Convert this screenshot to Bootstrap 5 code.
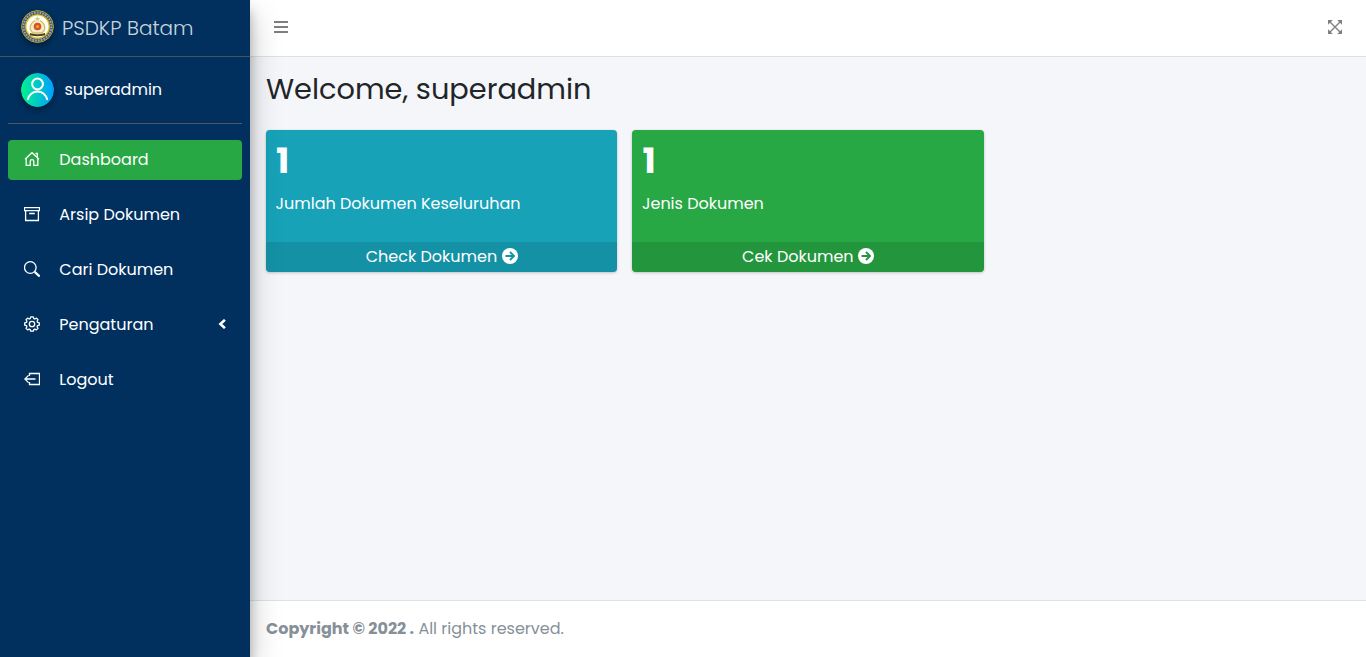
<!DOCTYPE html>
<html lang="id">
<head>
<meta charset="utf-8">
<meta name="viewport" content="width=device-width, initial-scale=1">
<title>PSDKP Batam</title>
<link href="https://cdn.jsdelivr.net/npm/bootstrap@5.3.0/dist/css/bootstrap.min.css" rel="stylesheet">
<style>
body{font-family:Poppins,Inter,sans-serif;font-size:16px;line-height:1.5;color:#212529;background:#f4f6f9;overflow:hidden}
a{text-decoration:none;color:inherit}
svg{display:block;flex:none}
.side{width:250px;background:#01305f;color:#fff;box-shadow:0 14px 28px rgba(0,0,0,.25),0 10px 10px rgba(0,0,0,.22);z-index:2}
.brand{height:57px;border-bottom:1px solid #4b545c;padding-left:21px;font-size:20px;font-weight:300;color:rgba(255,255,255,.8)}
.seal{margin:-3px 8px 0 0}
.round-pic{border-radius:50%;box-shadow:0 3px 6px rgba(0,0,0,.16),0 3px 6px rgba(0,0,0,.23)}
.user{height:67px;margin:0 8px;padding-left:13px;border-bottom:1px solid #4f5962;gap:10.5px}
.menu{padding:16px 8px;gap:15px}
.menu a{height:40px;padding:0 16px;border-radius:4px}
.menu a.current{background:#28a745}
.menu svg{margin-bottom:2px}
.menu svg.ic{margin-right:19.3px}
.topbar{height:57px;background:#fff;border-bottom:1px solid #dee2e6;padding:0 24px 2px;color:#7f7f7f}
.welcome{font-size:28.8px;font-weight:400;line-height:34px;margin:15px 0 24px}
.tiles{gap:15px;padding-left:16px}
.tile{width:351.4px;height:142px;border-radius:4px;color:#fff;box-shadow:0 0 1px rgba(0,0,0,.125),0 1px 3px rgba(0,0,0,.2);overflow:hidden}
.tile b{font-size:35.2px;font-weight:700;line-height:42px;padding:10px 10px 0;display:block}
.tile p{margin:10px 9.6px 0}
.tile a{height:30px;background:rgba(0,0,0,.1);gap:4.5px}
.tile svg{margin-bottom:2px}
.t-info{background:#17a2b8}.t-ok{background:#28a745}
.foot{height:57px;background:#fff;border-top:1px solid #dee2e6;padding:0 16px;color:#869099;gap:4.3px}
</style>
</head>
<body>
<div class="d-flex vh-100">
  <aside class="side d-flex flex-column flex-shrink-0 position-relative">
    <a href="#" class="brand d-flex align-items-center">
      <svg class="round-pic seal" width="33" height="33" viewBox="0 0 33 33">
        <circle cx="16.5" cy="16.5" r="16" fill="#55555f" stroke="#b5b02f"/>
        <circle cx="16.5" cy="16.5" r="13.9" fill="none" stroke="#a5a4ac" stroke-width="2" stroke-dasharray="1.600 1.200"/>
        <circle cx="16.5" cy="16.5" r="11.7" fill="#fffef2" stroke="#c9c52d" stroke-width="1.3"/>
        <path d="M16.5 6l1 2 2 .2-1.500 1.300.3 2-1.800-1-1.800 1 .3-2-1.500-1.300 2-.2z" fill="#e0cf80"/>
        <path d="M14 10.500C8 14 8 20 12 23h9c4-3 4-9-2-12.500" fill="#f3ebc9" stroke="#d3bb6c" stroke-width="1.300"/>
        <circle cx="16.500" cy="16.500" r="3.800" fill="#d9531d"/><circle cx="16.500" cy="16.500" r="1.500" fill="#f0a13b"/>
        <path d="M9 23q7.500 2.500 15 0v2.300q-7.500 2-15 0z" fill="#4b4221"/>
      </svg>
      <span>PSDKP Batam</span>
    </a>
    <div class="user d-flex align-items-center">
      <svg class="round-pic" width="33" height="34" viewBox="0 0 33 34">
        <defs><linearGradient id="av"><stop stop-color="#00f38d"/><stop offset="1" stop-color="#009eff"/></linearGradient></defs>
        <ellipse cx="16.500" cy="17" rx="16.500" ry="17" fill="url(#av)"/>
        <g fill="none" stroke="#fff" stroke-width="2" stroke-linecap="round"><circle cx="16.500" cy="11" r="5.400"/><path d="M6.900 26.300a9.800 9.800 0 0 1 19.200 0"/></g>
      </svg>
      <a href="#">superadmin</a>
    </div>
    <nav class="menu d-flex flex-column">
      <a href="#" class="current d-flex align-items-center">
        <svg class="ic" width="16" height="16" viewBox="0 0 16 16" fill="none" stroke="#fff" stroke-width="1.300"><path d="M1 8.200L8 1.700l7 6.500M11.500 2.500h1.800v4M2.200 7.300V14.400h4V10.400a1.800 1.800 0 0 1 3.600 0v4h4V7.300"/></svg>
        <span>Dashboard</span></a>
      <a href="#" class="d-flex align-items-center">
        <svg class="ic" width="16" height="16" viewBox="0 0 16 16" fill="none" stroke="#fff" stroke-width="1.300"><path d="M.5 1.600h15v3H.5zM1.600 4.600v9.900h12.800V4.600M5.200 7.500h5.600"/></svg>
        <span>Arsip Dokumen</span></a>
      <a href="#" class="d-flex align-items-center">
        <svg class="ic" width="16" height="16" viewBox="0 0 16 16" fill="none" stroke="#fff" stroke-width="1.300"><circle cx="6.300" cy="6.500" r="5.800"/><path d="M10.700 10.900l5 4.600" stroke-width="2.200"/></svg>
        <span>Cari Dokumen</span></a>
      <a href="#" class="d-flex align-items-center">
        <svg class="ic" width="16" height="16" viewBox="0 0 16 16" fill="none" stroke="#fff" stroke-width="1.300" stroke-linejoin="round"><circle cx="8" cy="8" r="2.700"/><path d="M6.700.8h2.600l.5 1.800 1 .4 1.700-.9 1.500 1.600-.9 1.600.4 1.100 1.800.4v2.400l-1.800.5-.4 1.100.9 1.600-1.600 1.500-1.600-.8-1 .4-.5 1.700H6.700l-.5-1.700-1-.4-1.600.8L2 12.400l.9-1.600-.4-1.100-1.800-.5V6.800l1.800-.4.4-1.100L2 3.700l1.600-1.600 1.600.9 1-.4z"/></svg>
        <span>Pengaturan</span>
        <svg class="ms-auto" width="8" height="10" viewBox="0 0 8 10" fill="none" stroke="#fff" stroke-width="2.600"><path d="M6.900.9L2.400 5l4.500 4.100"/></svg></a>
      <a href="#" class="d-flex align-items-center">
        <svg class="ic" width="16" height="16" viewBox="0 0 16 16" fill="none" stroke="#fff" stroke-width="1.300"><path d="M5.500 5V2.500h10v11h-10V11M11.500 8H1M4.500 4.400L.9 8l3.600 3.600"/></svg>
        <span>Logout</span></a>
    </nav>
  </aside>
  <div class="flex-grow-1 d-flex flex-column">
    <header class="topbar d-flex align-items-center justify-content-between">
      <svg width="14" height="12" viewBox="0 0 14 12"><path d="M0 0h14v2H0zM0 5h14v2H0zM0 10h14v2H0z" fill="currentColor"/></svg>
      <svg width="14" height="14" viewBox="0 0 14 14" fill="currentColor"><path d="M0 0h4.800L0 4.800zM14 0v4.800L9.200 0zM0 14V9.200L4.800 14zM14 14H9.200L14 9.200z"/><path d="M1.500 1.500l11 11M12.500 1.500l-11 11" stroke="currentColor" stroke-width="1.400"/></svg>
    </header>
    <main class="flex-grow-1">
      <h1 class="welcome px-3">Welcome, superadmin</h1>
      <div class="tiles d-flex">
        <section class="tile t-info d-flex flex-column">
          <b>1</b><p>Jumlah Dokumen Keseluruhan</p>
          <a href="#" class="mt-auto d-flex align-items-center justify-content-center"><span>Check Dokumen</span>
          <svg width="16" height="16" viewBox="0 0 16 16"><circle cx="8" cy="8" r="8" fill="#fff"/><path d="M3.500 8h8M8 4l4 4-4 4" fill="none" stroke="#1592a6" stroke-width="1.900"/></svg></a>
        </section>
        <section class="tile t-ok d-flex flex-column">
          <b>1</b><p>Jenis Dokumen</p>
          <a href="#" class="mt-auto d-flex align-items-center justify-content-center"><span>Cek Dokumen</span>
          <svg width="16" height="16" viewBox="0 0 16 16"><circle cx="8" cy="8" r="8" fill="#fff"/><path d="M3.500 8h8M8 4l4 4-4 4" fill="none" stroke="#24963e" stroke-width="1.900"/></svg></a>
        </section>
      </div>
    </main>
    <footer class="foot d-flex align-items-center"><strong>Copyright © 2022 .</strong><span>All rights reserved.</span></footer>
  </div>
</div>
</body>
</html>
